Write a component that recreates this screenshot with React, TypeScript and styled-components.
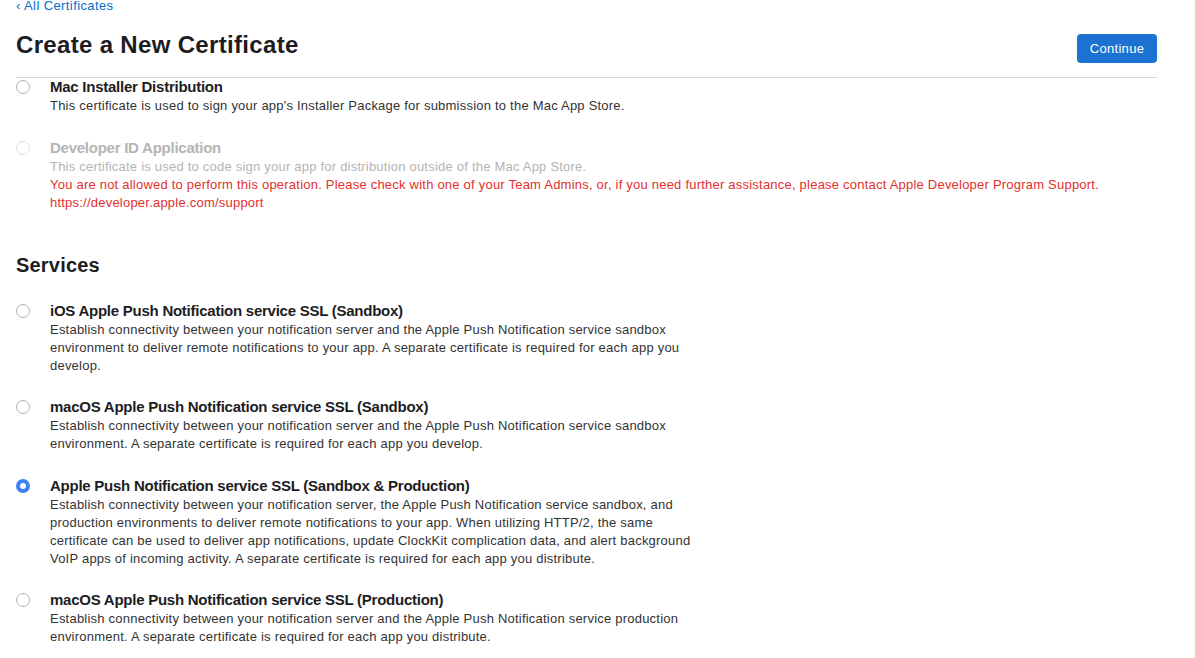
import React from "react";
import styled, { createGlobalStyle } from "styled-components";

const Global = createGlobalStyle`
  html, body { margin: 0; padding: 0; background: #fff; }
  body { font-family: "Liberation Sans", Arial, sans-serif; color: #1d1d1f; -webkit-font-smoothing: antialiased; }
`;

const Page = styled.div`
  padding: 0 38px 0 16px;
  overflow: hidden;
  height: 658px;
  box-sizing: border-box;
`;

const BackLink = styled.a`
  display: block;
  margin-top: -2px;
  font-size: 13px;
  line-height: 16px;
  letter-spacing: 0.4px;
  color: #0070c9;
  text-decoration: none;
`;

const HeaderRow = styled.div`
  display: flex;
  justify-content: space-between;
  align-items: flex-start;
  margin-top: 16px;
  padding-bottom: 14px;
  border-bottom: 1px solid #d6d6d6;
`;

const Title = styled.h1`
  margin: 0;
  font-size: 24px;
  line-height: 30px;
  font-weight: 700;
  letter-spacing: 0.33px;
  color: #1d1d1f;
`;

const ContinueButton = styled.button`
  margin-top: 4px;
  width: 80px;
  height: 29px;
  border: none;
  border-radius: 4px;
  background: #1b72d0;
  color: #fff;
  font-family: inherit;
  font-size: 13px;
  letter-spacing: 0.3px;
  cursor: pointer;
`;

const Item = styled.div`
  display: flex;
  margin-bottom: 23.5px;
`;

const Radio = styled.span<{ $checked?: boolean; $disabled?: boolean }>`
  flex: none;
  box-sizing: border-box;
  width: 14px;
  height: 14px;
  margin: 2px 20px 0 0;
  border-radius: 50%;
  border: ${(p) => (p.$checked ? "4.5px solid #3b82f6" : `1px solid ${p.$disabled ? "#dedede" : "#b3b3b3"}`)};
  background: #fff;
`;

const Body = styled.div<{ $disabled?: boolean }>`
  max-width: 650px;
  color: ${(p) => (p.$disabled ? "#b4b4b4" : "#333")};
`;

const ItemTitle = styled.div<{ $disabled?: boolean }>`
  margin-bottom: 1px;
  font-size: 15px;
  line-height: 18px;
  font-weight: 600;
  letter-spacing: -0.25px;
  color: ${(p) => (p.$disabled ? "#b4b4b4" : "#1d1d1f")};
`;

const Desc = styled.div`
  font-size: 13px;
  line-height: 18px;
  letter-spacing: 0.22px;
`;

const ErrorText = styled.div`
  font-size: 13px;
  line-height: 18px;
  letter-spacing: 0.22px;
  color: #e3302f;
  white-space: nowrap;
`;

const SectionHeading = styled.h2`
  margin: 41px 0 25px;
  font-size: 20px;
  line-height: 24px;
  font-weight: 700;
  letter-spacing: 0.2px;
  color: #1d1d1f;
`;

type Cert = { title: string; desc: string; checked?: boolean; disabled?: boolean; error?: boolean };

const certs: Cert[] = [
  {
    title: "Mac Installer Distribution",
    desc: "This certificate is used to sign your app's Installer Package for submission to the Mac App Store.",
  },
  {
    title: "Developer ID Application",
    desc: "This certificate is used to code sign your app for distribution outside of the Mac App Store.",
    disabled: true,
    error: true,
  },
];

const services: Cert[] = [
  {
    title: "iOS Apple Push Notification service SSL (Sandbox)",
    desc: "Establish connectivity between your notification server and the Apple Push Notification service sandbox environment to deliver remote notifications to your app. A separate certificate is required for each app you develop.",
  },
  {
    title: "macOS Apple Push Notification service SSL (Sandbox)",
    desc: "Establish connectivity between your notification server and the Apple Push Notification service sandbox environment. A separate certificate is required for each app you develop.",
  },
  {
    title: "Apple Push Notification service SSL (Sandbox & Production)",
    desc: "Establish connectivity between your notification server, the Apple Push Notification service sandbox, and production environments to deliver remote notifications to your app. When utilizing HTTP/2, the same certificate can be used to deliver app notifications, update ClockKit complication data, and alert background VoIP apps of incoming activity. A separate certificate is required for each app you distribute.",
    checked: true,
  },
  {
    title: "macOS Apple Push Notification service SSL (Production)",
    desc: "Establish connectivity between your notification server and the Apple Push Notification service production environment. A separate certificate is required for each app you distribute.",
  },
];

const CertItem = ({ c }: { c: Cert }) => (
  <Item>
    <Radio $checked={c.checked} $disabled={c.disabled} />
    <Body $disabled={c.disabled}>
      <ItemTitle $disabled={c.disabled}>{c.title}</ItemTitle>
      <Desc>{c.desc}</Desc>
      {c.error && (
        <>
          <ErrorText>
            You are not allowed to perform this operation. Please check with one of your Team Admins, or, if you need further assistance, please contact Apple Developer Program Support.
          </ErrorText>
          <ErrorText>https://developer.apple.com/support</ErrorText>
        </>
      )}
    </Body>
  </Item>
);

export default function App() {
  return (
    <>
      <Global />
      <Page>
        <BackLink href="#">‹ All Certificates</BackLink>
        <HeaderRow>
          <Title>Create a New Certificate</Title>
          <ContinueButton>Continue</ContinueButton>
        </HeaderRow>
        {certs.map((c) => (
          <CertItem key={c.title} c={c} />
        ))}
        <SectionHeading>Services</SectionHeading>
        {services.map((c) => (
          <CertItem key={c.title} c={c} />
        ))}
      </Page>
    </>
  );
}
